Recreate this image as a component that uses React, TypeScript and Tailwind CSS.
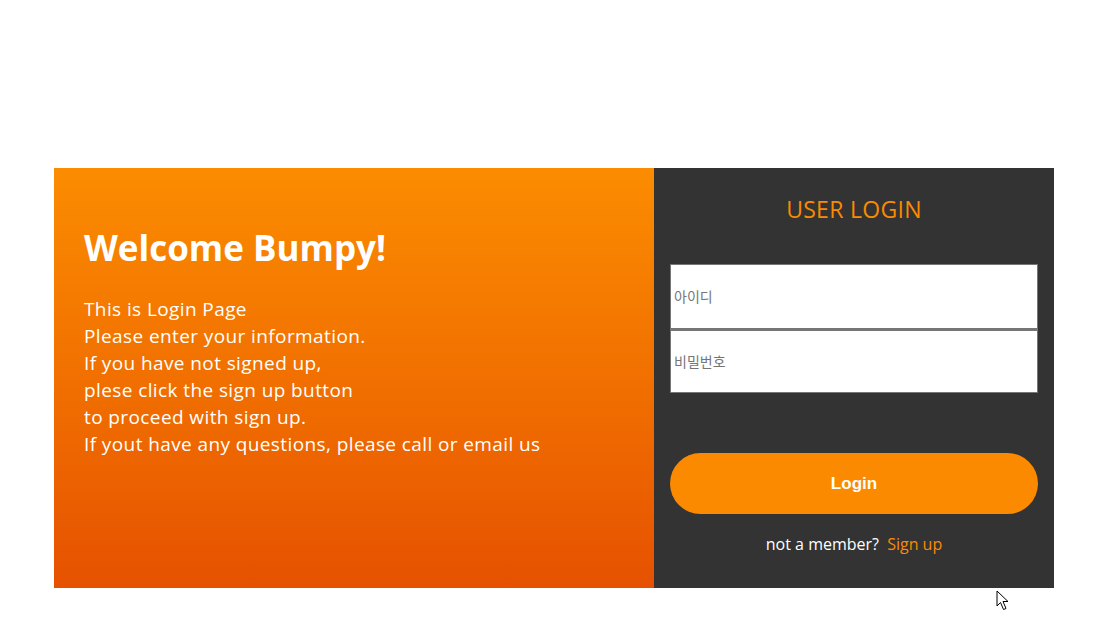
import React from "react";

const FONT = { fontFamily: '"Open Sans", "Noto Sans CJK KR", sans-serif' };

const INTRO = [
  "This is Login Page",
  "Please enter your information.",
  "If you have not signed up,",
  "plese click the sign up button",
  "to proceed with sign up.",
  "If yout have any questions, please call or email us",
];

function Cursor() {
  return (
    <svg className="absolute left-[996px] top-[590px]" width="14" height="22" viewBox="0 0 14 22">
      <path d="M1 1 L1 16 L4.5 12.5 L7.5 19.5 L10 18.5 L7 11.5 L12 11.5 Z" fill="#fff" stroke="#000" strokeWidth="1" strokeLinejoin="round" />
    </svg>
  );
}

export default function App() {
  return (
    <div className="relative min-h-[635px] bg-white" style={FONT}>
      <div className="pt-[168px] pl-[54px]">
        <div className="flex w-[1000px] h-[420px]">
          {/* intro side */}
          <div className="w-[600px] bg-gradient-to-b from-[#fb8c00] to-[#e65100] pl-[30px] pt-[54px] text-white">
            <h1 className="text-[35px] font-bold leading-[52px]">Welcome Bumpy!</h1>
            <div className="mt-[22px] text-[19px] leading-[27px] tracking-[0.4px]">
              {INTRO.map((l) => (
                <p key={l}>{l}</p>
              ))}
            </div>
          </div>

          {/* login side */}
          <div className="w-[400px] bg-[#333333] px-4 pt-[23px] flex flex-col">
            <h2 className="text-center text-[23px] tracking-[0.3px] text-[#fb8a00] leading-[36px]">USER LOGIN</h2>
            <div className="mt-[37px] flex flex-col">
              <input
                className="h-[65px] w-full bg-white border border-[#767676] px-[3px] text-[14px] placeholder:text-[#757575] outline-none"
                placeholder="아이디"
              />
              <input
                type="password"
                className="h-[64px] w-full bg-white border border-[#767676] border-t-2 px-[3px] text-[14px] placeholder:text-[#757575] outline-none"
                placeholder="비밀번호"
              />
            </div>
            <button
              className="mt-[60px] h-[61px] w-full rounded-full bg-[#fb8a00] text-white text-[17px] font-bold"
              style={{ fontFamily: '"Liberation Sans", Arial, sans-serif' }}
            >
              Login
            </button>
            <p className="mt-[18px] text-center text-[16px] text-white leading-[24px]">
              not a member? <span className="ml-1 text-[#fb8a00]">Sign up</span>
            </p>
          </div>
        </div>
      </div>
      <Cursor />
    </div>
  );
}
